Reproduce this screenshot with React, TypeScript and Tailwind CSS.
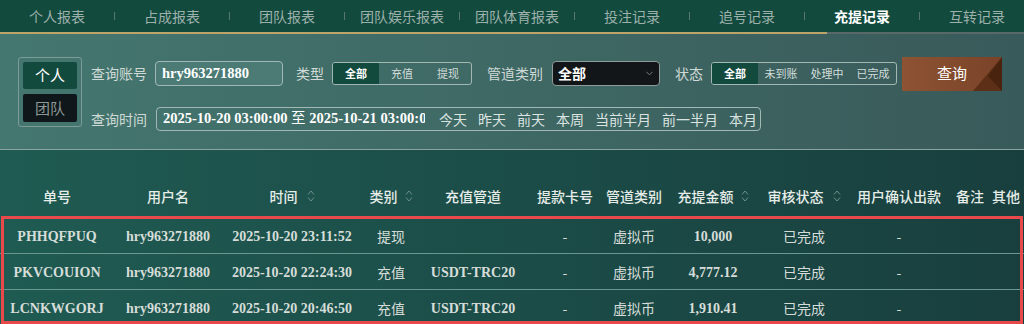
import { ChevronDown } from 'lucide-react';

const tabs = ['个人报表', '占成报表', '团队报表', '团队娱乐报表', '团队体育报表', '投注记录', '追号记录', '充提记录', '互转记录'];
const quick = ['今天', '昨天', '前天', '本周', '当前半月', '前一半月', '本月'];

const cols = 'grid grid-cols-[114px_108px_140px_58px_106px_78px_60px_98px_84px_106px_36px_36px]';
const serif = "font-['Liberation_Serif','Noto_Sans_CJK_SC',serif] font-bold";

const rows = [
  { no: 'PHHQFPUQ', user: 'hry963271880', time: '2025-10-20 23:11:52', kind: '提现', channel: '', amount: '10,000' },
  { no: 'PKVCOUION', user: 'hry963271880', time: '2025-10-20 22:24:30', kind: '充值', channel: 'USDT-TRC20', amount: '4,777.12' },
  { no: 'LCNKWGORJ', user: 'hry963271880', time: '2025-10-20 20:46:50', kind: '充值', channel: 'USDT-TRC20', amount: '1,910.41' },
];

function SortIcon() {
  return (
    <svg width="8" height="14" viewBox="0 0 8 14" fill="none" stroke="#6f8f8a" strokeWidth="1">
      <path d="M1 5.5 L4 2 L7 5.5" />
      <path d="M1 8.5 L4 12 L7 8.5" />
    </svg>
  );
}

function Segmented({ items }: { items: string[] }) {
  return (
    <div className="flex h-[23px] overflow-hidden rounded-[3px] border border-[#a3b8b4]">
      {items.map((t, i) => (
        <div
          key={t}
          className={`flex w-[46px] items-center justify-center text-[11px] ${
            i === 0 ? 'bg-[#134a3e] font-bold text-white' : 'text-[#d3ddda]'
          }`}
        >
          {t}
        </div>
      ))}
    </div>
  );
}

export default function App() {
  return (
    <div className="h-[324px] w-[1024px] overflow-hidden font-['Noto_Sans_CJK_SC',sans-serif] text-[14px]">
      {/* tabs */}
      <div className="flex h-[32px] items-center overflow-hidden bg-[#124a3e]">
        {tabs.map((t, i) => (
          <div key={t} className="flex shrink-0 items-center">
            <div
              className={`w-[114px] text-center ${
                t === '充提记录' ? 'font-bold text-white' : 'text-[#9db1ab]'
              }`}
            >
              {t}
            </div>
            {i < tabs.length - 1 && <span className="h-[8px] w-px bg-[#557a72]" />}
          </div>
        ))}
      </div>
      <div className="flex h-[2px]">
        <div className="w-[827px] bg-[#bda56a]" />
        <div className="flex-1 bg-[#59696a]" />
      </div>

      {/* filters */}
      <div className="flex h-[116px] border-b border-[#8aa5a1] bg-gradient-to-r from-[#44776f] to-[#395a5a] pl-[18px] pt-[23px] text-[#cfdad6]">
        <div className="flex h-[70px] w-[64px] flex-col gap-[5px] rounded-[3px] border border-[#7d9c97] p-[4px]">
          <div className="flex h-[28px] items-center justify-center rounded-[2px] bg-[#134a3e] text-[15px] text-white">个人</div>
          <div className="flex h-[29px] items-center justify-center rounded-[2px] bg-[#0f171a] text-[15px] text-[#8c9896]">团队</div>
        </div>
        <div className="ml-[9px] flex flex-col pt-[4px]">
          <div className="flex h-[25px] items-center">
            <span>查询账号</span>
            <div className={`ml-[8px] flex h-[25px] w-[128px] items-center rounded-[4px] border border-[#a2b8b5] bg-[#4c7b76] pl-[6px] text-[14.5px] text-white ${serif}`}>
              hry963271880
            </div>
            <span className="ml-[13px]">类型</span>
            <div className="ml-[8px]">
              <Segmented items={['全部', '充值', '提现']} />
            </div>
            <span className="ml-[15px]">管道类别</span>
            <div className="ml-[9px] flex h-[25px] w-[108px] items-center justify-between rounded-[4px] border border-[#8e9d9b] bg-[#131619] pl-[5px] pr-[4px]">
              <span className="font-bold text-white">全部</span>
              <ChevronDown size={11} color="#7d8585" />
            </div>
            <span className="ml-[15px]">状态</span>
            <div className="ml-[8px]">
              <Segmented items={['全部', '未到账', '处理中', '已完成']} />
            </div>
            <button
              type="button"
              className="relative ml-[5px] h-[34px] w-[100px] overflow-hidden bg-gradient-to-r from-[#8d5333] to-[#7a4328] text-[15px] text-white"
            >
              <svg className="absolute inset-0" width="100" height="34" viewBox="0 0 100 34">
                <polygon points="100,0 71,34 100,34" fill="#5d2f17" />
                <polygon points="100,0 86,19 100,34" fill="#4a230f" />
              </svg>
              <span className="relative">查询</span>
            </button>
          </div>
          <div className="mt-[21px] flex h-[24px] items-center">
            <span>查询时间</span>
            <div className="ml-[9px] flex h-[24px] w-[605px] items-center rounded-[4px] border border-[#a2b8b5] pl-[6px]">
              <div className={`w-[262px] shrink-0 overflow-hidden whitespace-nowrap text-[14.5px] text-white ${serif}`}>
                2025-10-20 03:00:00 <span className="font-normal">至</span> 2025-10-21 03:00:00
              </div>
              <div className="ml-[14px] flex gap-[11px] text-[#dbe3e0]">
                {quick.map((q) => (
                  <span key={q}>{q}</span>
                ))}
              </div>
            </div>
          </div>
        </div>
      </div>

      {/* table */}
      <div className="h-[175px] bg-gradient-to-r from-[#1f5b52] to-[#183f3e]">
        <div className={`${cols} h-[68px] pt-[24px] font-medium text-[#e6ede9]`}>
          <div className="flex items-center justify-center">单号</div>
          <div className="flex items-center justify-center">用户名</div>
          <div className="flex items-center justify-center gap-[9px]">时间<SortIcon /></div>
          <div className="flex items-center justify-center gap-[7px]">类别<SortIcon /></div>
          <div className="flex items-center justify-center">充值管道</div>
          <div className="flex items-center justify-center">提款卡号</div>
          <div className="flex items-center justify-center">管道类别</div>
          <div className="flex items-center justify-center gap-[7px]">充提金额<SortIcon /></div>
          <div className="flex items-center justify-center gap-[9px]">审核状态<SortIcon /></div>
          <div className="flex items-center justify-center">用户确认出款</div>
          <div className="flex items-center justify-center">备注</div>
          <div className="flex items-center justify-center">其他</div>
        </div>
        <div className="relative">
          {rows.map((r) => (
            <div key={r.no} className={`${cols} h-[36px] items-center border-b border-[#6a9891] pt-[2px] text-[#d6ddd9]`}>
              <div className={`text-center ${serif}`}>{r.no}</div>
              <div className={`text-center ${serif}`}>{r.user}</div>
              <div className={`text-center ${serif}`}>{r.time}</div>
              <div className="text-center">{r.kind}</div>
              <div className={`text-center ${serif}`}>{r.channel}</div>
              <div className="text-center">-</div>
              <div className="text-center">虚拟币</div>
              <div className={`text-center ${serif}`}>{r.amount}</div>
              <div className="text-center">已完成</div>
              <div className="text-center">-</div>
              <div />
              <div />
            </div>
          ))}
          <div className="pointer-events-none absolute -top-[2px] left-[1px] right-[1px] h-[108px] border-[3px] border-[#e8494b]" />
        </div>
      </div>
    </div>
  );
}
